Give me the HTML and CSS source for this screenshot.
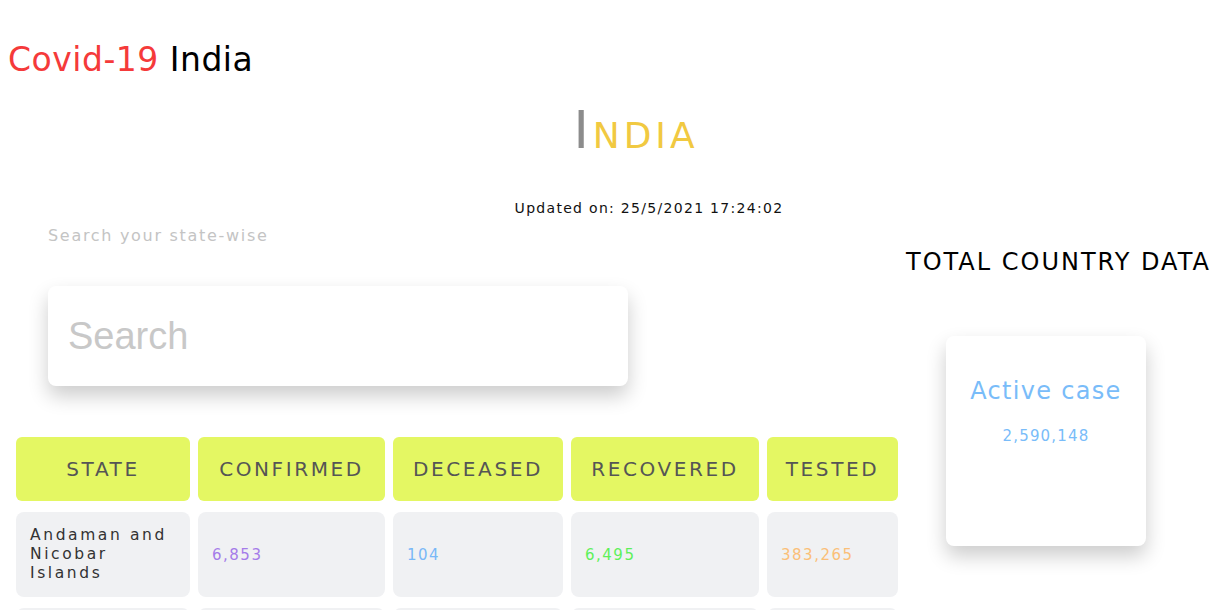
FILE: index.html
```html
<!DOCTYPE html>
<html>
<head>
<meta charset="utf-8">
<link rel="stylesheet" href="styles.css">
</head>
<body>
<h1 class="brand"><span class="brand-red">Covid-19</span> India</h1>
<h2 class="country">India</h2>
<p class="updated">Updated on: 25/5/2021 17:24:02</p>
<div class="main">
  <div class="left">
    <p class="search-label">Search your state-wise</p>
    <div class="search-box"><input class="search-input" type="text" placeholder="Search"></div>
    <div class="grid">
      <div class="head">State</div>
      <div class="head">Confirmed</div>
      <div class="head">Deceased</div>
      <div class="head">Recovered</div>
      <div class="head">Tested</div>
      <div class="cell state">Andaman and Nicobar Islands</div>
      <div class="cell num confirmed">6,853</div>
      <div class="cell num deceased">104</div>
      <div class="cell num recovered">6,495</div>
      <div class="cell num tested">383,265</div>
      <div class="cell state">Andhra Pradesh</div>
      <div class="cell num confirmed">1,602,811</div>
      <div class="cell num deceased">10,222</div>
      <div class="cell num recovered">1,388,771</div>
      <div class="cell num tested">18,716,624</div>
    </div>
  </div>
  <div class="right">
    <h3 class="total-title">TOTAL COUNTRY DATA</h3>
    <div class="card">
      <div class="card-title">Active case</div>
      <div class="card-num">2,590,148</div>
    </div>
  </div>
</div>
</body>
</html>
```

FILE: styles.css
```css
html { margin: 0; padding: 0; overflow: hidden; height: 610px; }
body {
  margin: 8px;
  font-family: "DejaVu Sans", "Open Sans", sans-serif;
  background: #fff;
}
.brand {
  margin: 32px 0 0 0;
  font-size: 33px;
  line-height: 40px;
  font-weight: 400;
  color: #000;
  letter-spacing: 0.5px;
}
.brand-red { color: #f53a3a; }
.country {
  margin: 18px 0 0 0;
  padding-left: 52px;
  text-align: center;
  font-size: 52px;
  line-height: 64px;
  font-weight: 400;
  font-variant: small-caps;
  color: #f1c941;
  letter-spacing: 4px;
}
.country::first-letter { color: #8c8c8c; }
.updated {
  margin: 37px 0 0 0;
  padding-left: 78px;
  text-align: center;
  font-size: 14px;
  line-height: 18px;
  letter-spacing: 1.3px;
  color: #111;
}
.main {
  display: flex;
  align-items: flex-start;
}
.left { width: 898px; flex: none; }
.right { flex: 1; min-width: 0; }
.search-label {
  margin: 9px 0 0 40px;
  font-size: 16px;
  line-height: 20px;
  color: #c4c4c4;
  letter-spacing: 1.7px;
}
.search-box {
  margin: 40px 0 0 40px;
  width: 580px;
  height: 100px;
  border-radius: 8px;
  background: #fff;
  box-shadow: 0 10px 20px rgba(0,0,0,0.2);
  display: flex;
  align-items: center;
}
.search-input {
  border: none;
  outline: none;
  background: transparent;
  width: 100%;
  padding: 0 20px;
  font-family: "Liberation Sans", Arial, sans-serif;
  font-size: 38px;
  color: #333;
}
.search-input::placeholder { color: #c8c8c8; }
.grid {
  margin: 51px 0 0 8px;
  display: grid;
  grid-template-columns: 174px 187px 170px 188px 131px;
  column-gap: 8px;
  row-gap: 11px;
}
.head {
  height: 64px;
  background: #e4f763;
  border-radius: 6px;
  display: flex;
  align-items: center;
  justify-content: center;
  text-transform: uppercase;
  font-size: 20px;
  letter-spacing: 2.6px;
  color: #555;
}
.cell {
  height: 85px;
  background: #f0f1f3;
  border-radius: 8px;
  display: flex;
  align-items: center;
  padding-left: 14px;
  box-sizing: border-box;
  font-size: 15px;
  letter-spacing: 1.5px;
}
.state {
  color: #333;
  line-height: 19px;
  padding-right: 12px;
  font-size: 15.5px;
  letter-spacing: 2.6px;
}
.confirmed { color: #a57ce9; }
.deceased { color: #79b8f7; }
.recovered { color: #5ef05a; }
.tested { color: #fbbf78; }
.total-title {
  margin: 31px 0 0 0;
  font-size: 24px;
  line-height: 28px;
  font-weight: 400;
  letter-spacing: 2px;
  color: #000;
  white-space: nowrap;
}
.card {
  margin: 60px 0 0 40px;
  width: 200px;
  height: 210px;
  background: #fff;
  border-radius: 8px;
  box-shadow: 0 10px 20px rgba(0,0,0,0.2);
  text-align: center;
  padding-top: 40px;
  box-sizing: border-box;
}
.card-title {
  font-size: 24px;
  line-height: 30px;
  color: #79bcf9;
  letter-spacing: 1.3px;
}
.card-num {
  margin-top: 20px;
  font-size: 15px;
  line-height: 20px;
  color: #79bcf9;
  letter-spacing: 1.2px;
}
```
